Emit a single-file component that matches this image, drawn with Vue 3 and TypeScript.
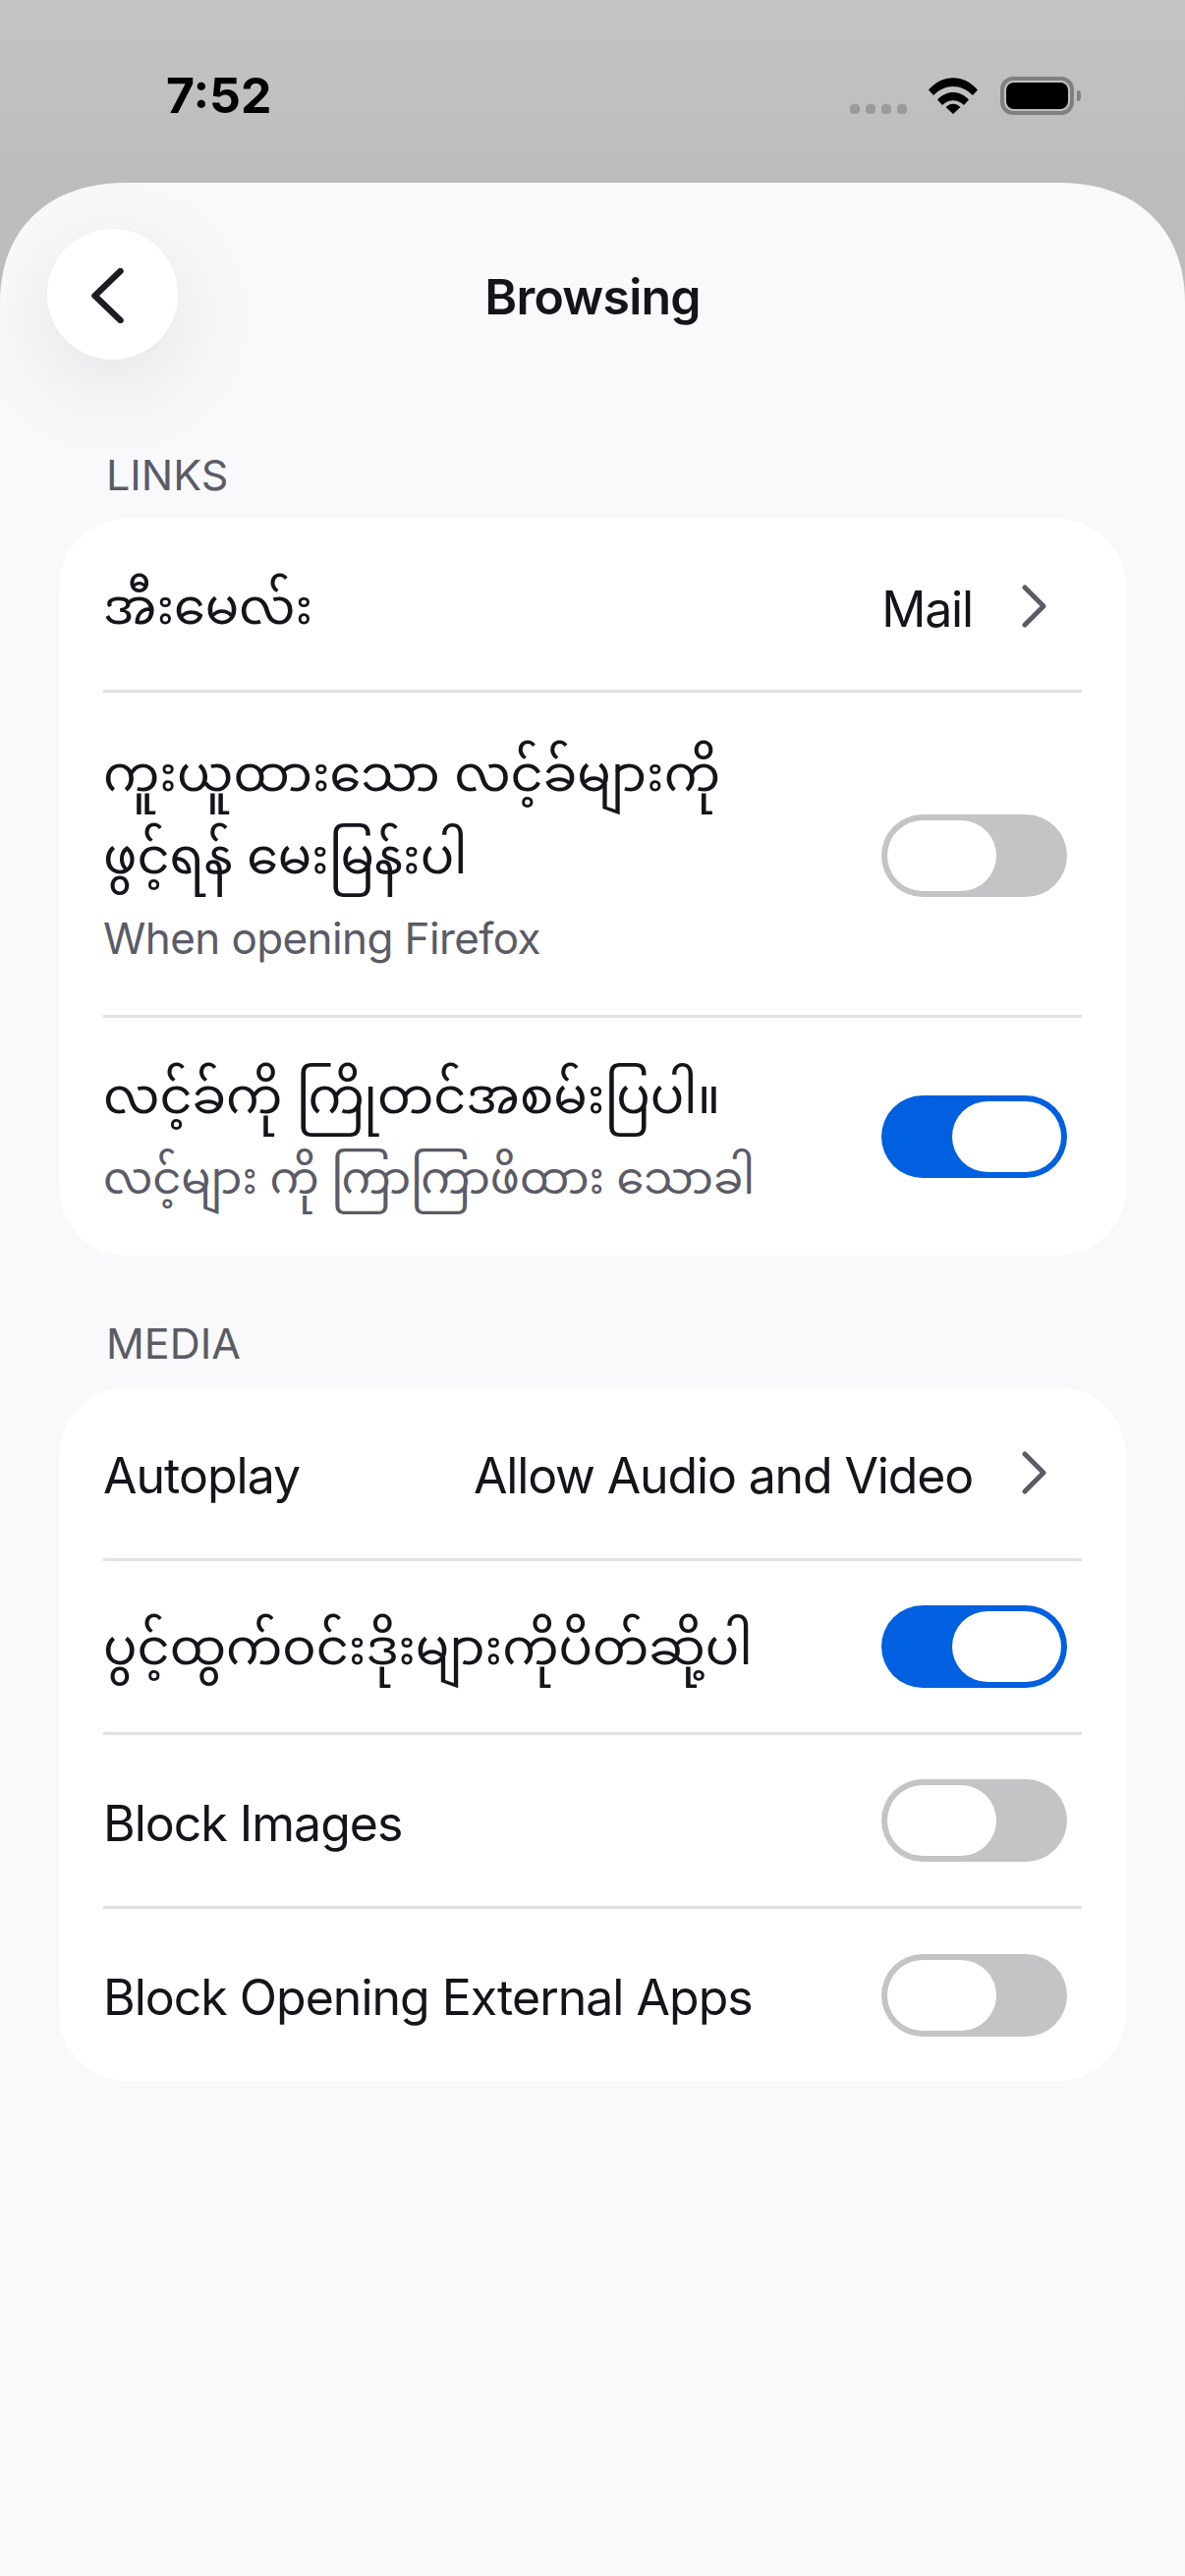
<template>
  <div class="screen">
    <div class="status">
      <span class="time">7:52</span>
      <div class="status-icons">
        <div class="dots"><i></i><i></i><i></i><i></i></div>
        <svg class="wifi" width="50" height="37" viewBox="0 0 50 37">
          <path d="M0 12.500C14 -4 36 -4 50 12.500L45 18C33 6 17 6 5 18Z" />
          <path d="M9 22.500C18 12.500 32 12.500 41 22.500L36 28C30 21.500 20 21.500 14 28Z" />
          <path d="M17.500 30C22 25.500 28 25.500 32.500 30L25 37Z" />
        </svg>
        <div class="battery"><div class="battery-fill"></div></div>
      </div>
    </div>

    <div class="sheet">
      <header class="nav">
        <button class="back">
          <svg width="33" height="56" viewBox="0 0 33 56">
            <path d="M29.500 3L3.500 28L29.500 53" fill="none" stroke="#1c1c22" stroke-width="6.500" stroke-linecap="round" stroke-linejoin="round" />
          </svg>
        </button>
        <h1>Browsing</h1>
      </header>

      <section v-for="group in groups" :key="group.title" class="group">
        <h2>{{ group.title }}</h2>
        <div class="card">
          <div v-for="row in group.rows" :key="row.label" class="row">
            <div class="row-text">
              <div class="label" :class="{ mm: isBurmese(row.label) }">
                <span v-for="line in row.label.split('\n')" :key="line">{{ line }}</span>
              </div>
              <div v-if="row.sub" class="sub" :class="{ mm: isBurmese(row.sub) }">{{ row.sub }}</div>
            </div>
            <template v-if="row.value">
              <span class="value">{{ row.value }}</span>
              <svg class="chevron" width="25" height="44" viewBox="0 0 25 44">
                <path d="M3 3L22 22L3 41" fill="none" stroke="#5b5b66" stroke-width="5" stroke-linecap="round" stroke-linejoin="round" />
              </svg>
            </template>
            <div v-else class="switch" :class="{ on: row.on }"><div class="knob"></div></div>
          </div>
        </div>
      </section>
    </div>
  </div>
</template>

<script setup lang="ts">
interface Row {
  label: string
  sub?: string
  value?: string
  on?: boolean
}

const groups: { title: string; rows: Row[] }[] = [
  {
    title: 'LINKS',
    rows: [
      { label: 'အီးမေလ်း', value: 'Mail' },
      { label: 'ကူးယူထားသော လင့်ခ်များကို\nဖွင့်ရန် မေးမြန်းပါ', sub: 'When opening Firefox', on: false },
      { label: 'လင့်ခ်ကို ကြိုတင်အစမ်းပြပါ။', sub: 'လင့်များ ကို ကြာကြာဖိထား သောခါ', on: true },
    ],
  },
  {
    title: 'MEDIA',
    rows: [
      { label: 'Autoplay', value: 'Allow Audio and Video' },
      { label: 'ပွင့်ထွက်ဝင်းဒိုးများကိုပိတ်ဆို့ပါ', on: true },
      { label: 'Block Images', on: false },
      { label: 'Block Opening External Apps', on: false },
    ],
  },
]

function isBurmese(text: string) {
  return /[\u1000-\u109f]/.test(text)
}
</script>

<style>
html,
body {
  margin: 0;
  background: #f9f9fb;
}
</style>

<style scoped>
.screen {
  width: 1206px;
  height: 2622px;
  overflow: hidden;
  background: linear-gradient(#c4c4c6, #bcbcbe 186px);
  font-family: Inter, "Noto Sans", "Noto Sans Myanmar", Padauk, sans-serif;
  color: #15141a;
  display: flex;
  flex-direction: column;
}
.status {
  height: 186px;
  box-sizing: border-box;
  padding: 68px 113px 0 169px;
  display: flex;
  justify-content: space-between;
  align-items: flex-start;
}
.time {
  font-size: 50px;
  font-weight: 700;
  line-height: 58px;
  color: #000;
}
.status-icons {
  display: flex;
  align-items: flex-end;
  padding-top: 10px;
}
.dots {
  display: flex;
  gap: 6px;
  margin-right: 22px;
  margin-bottom: 1px;
}
.dots i {
  width: 10px;
  height: 10px;
  border-radius: 4px;
  background: #9b9b9d;
}
.wifi {
  fill: #000;
  margin-right: 23px;
  margin-bottom: 1px;
}
.battery {
  position: relative;
  width: 75px;
  height: 39px;
  box-sizing: border-box;
  border: 4px solid #808082;
  border-radius: 13px;
  padding: 2px;
}
.battery::after {
  content: "";
  position: absolute;
  right: -11px;
  top: 10px;
  width: 4px;
  height: 11px;
  background: #808082;
  border-radius: 0 5px 5px 0;
}
.battery-fill {
  height: 100%;
  background: #000;
  border-radius: 8px;
}
.sheet {
  flex: 1;
  background: #f9f9fb;
  /* continuous corner, a plain radius looks too round here */
  clip-path: path("M0 122C0 48 48 0 128 0L1078 0C1158 0 1206 48 1206 122L1206 2436L0 2436Z");
  padding: 47px 60px 0;
}
.nav {
  position: relative;
  height: 133px;
  margin-bottom: 92px;
  display: flex;
  align-items: center;
  justify-content: center;
}
.nav h1 {
  margin: 0;
  font-size: 50px;
  font-weight: 600;
  letter-spacing: -0.8px;
  line-height: 60px;
  padding-top: 4px;
}
.back {
  position: absolute;
  left: -12px;
  top: 0;
  width: 133px;
  height: 133px;
  border: 0;
  padding: 2px 10px 0 0;
  border-radius: 50%;
  background: #fff;
  box-shadow: 0 24px 96px rgba(0, 0, 0, 0.1);
  display: flex;
  align-items: center;
  justify-content: center;
}
.group {
  margin-bottom: 64px;
}
.group h2 {
  margin: 0 0 20px;
  padding-left: 48px;
  font-size: 43px;
  font-weight: 400;
  line-height: 50px;
  color: #5b5b66;
}
.card {
  background: #fff;
  border-radius: 70px;
  padding: 0 45px;
}
.row {
  display: flex;
  align-items: center;
  min-height: 177px;
  box-sizing: border-box;
  padding: 38px 15px 38px 0;
  border-bottom: 3px solid #e0e0e6;
}
.row:last-child {
  min-height: 175px;
  padding-bottom: 37px;
  padding-top: 37px;
  border-bottom: 0;
}
.group:first-of-type .row:first-child {
  padding-top: 42px;
}
.group:first-of-type .row:nth-child(2) {
  padding-top: 40px;
  padding-bottom: 36px;
}
.row-text {
  flex: 1;
  min-width: 0;
}
.label {
  font-size: 50px;
  letter-spacing: -1px;
  line-height: 84px;
  padding-top: 5px;
  display: flex;
  flex-direction: column;
}
.label.mm {
  font-size: 51px;
  letter-spacing: 0;
  padding-top: 0;
}
.sub {
  font-size: 44px;
  letter-spacing: -0.6px;
  line-height: 84px;
  color: #5b5b66;
}
.sub.mm {
  font-size: 44.7px;
  letter-spacing: 0;
}
.value {
  font-size: 50px;
  letter-spacing: -1.15px;
  line-height: 60px;
  padding-top: 5px;
  margin-right: 50px;
}
.chevron {
  margin-right: 21px;
}
.switch {
  width: 189px;
  height: 84px;
  box-sizing: border-box;
  padding: 6px;
  border-radius: 42px;
  background: #c4c4c6;
  display: flex;
  flex-shrink: 0;
}
.switch.on {
  background: #0060df;
  justify-content: flex-end;
}
.knob {
  width: 111px;
  height: 72px;
  border-radius: 36px;
  background: #fff;
}
</style>
